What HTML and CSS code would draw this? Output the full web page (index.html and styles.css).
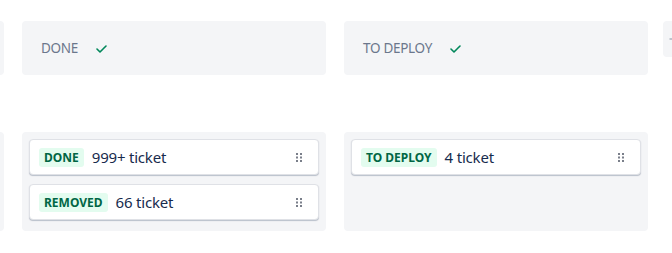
FILE: index.html
```html
<!DOCTYPE html>
<html>
<head>
<meta charset="utf-8">
<link rel="stylesheet" href="styles.css">
</head>
<body>
<div class="board">
  <section class="column">
    <div class="col-head"></div>
    <div class="col-body"></div>
  </section>
  <section class="column">
    <div class="col-head">
      <span class="col-title">DONE</span>
      <svg class="check" width="11" height="8" viewBox="0 0 11 8"><path d="M1 4 L4 7 L10 1" fill="none" stroke="#00875a" stroke-width="1.6" stroke-linecap="round" stroke-linejoin="round"/></svg>
    </div>
    <div class="col-body">
      <div class="card">
        <span class="badge">DONE</span>
        <span class="count">999+ ticket</span>
        <svg class="grip" width="6" height="9" viewBox="0 0 6 9"><g fill="#7a7f8a"><rect x="0" y="0" width="2" height="2"/><rect x="4" y="0" width="2" height="2"/><rect x="0" y="3.5" width="2" height="2"/><rect x="4" y="3.5" width="2" height="2"/><rect x="0" y="7" width="2" height="2"/><rect x="4" y="7" width="2" height="2"/></g></svg>
      </div>
      <div class="card">
        <span class="badge">REMOVED</span>
        <span class="count">66 ticket</span>
        <svg class="grip" width="6" height="9" viewBox="0 0 6 9"><g fill="#7a7f8a"><rect x="0" y="0" width="2" height="2"/><rect x="4" y="0" width="2" height="2"/><rect x="0" y="3.5" width="2" height="2"/><rect x="4" y="3.5" width="2" height="2"/><rect x="0" y="7" width="2" height="2"/><rect x="4" y="7" width="2" height="2"/></g></svg>
      </div>
    </div>
  </section>
  <section class="column">
    <div class="col-head">
      <span class="col-title">TO DEPLOY</span>
      <svg class="check" width="11" height="8" viewBox="0 0 11 8"><path d="M1 4 L4 7 L10 1" fill="none" stroke="#00875a" stroke-width="1.6" stroke-linecap="round" stroke-linejoin="round"/></svg>
    </div>
    <div class="col-body">
      <div class="card">
        <span class="badge">TO DEPLOY</span>
        <span class="count">4 ticket</span>
        <svg class="grip" width="6" height="9" viewBox="0 0 6 9"><g fill="#7a7f8a"><rect x="0" y="0" width="2" height="2"/><rect x="4" y="0" width="2" height="2"/><rect x="0" y="3.5" width="2" height="2"/><rect x="4" y="3.5" width="2" height="2"/><rect x="0" y="7" width="2" height="2"/><rect x="4" y="7" width="2" height="2"/></g></svg>
      </div>
    </div>
  </section>
  <div class="add-col">
    <svg class="add-icon" width="8" height="8" viewBox="0 0 8 8"><path d="M4 0.5 V7.5 M0.5 4 H7.5" stroke="#8993a4" stroke-width="1.2"/></svg>
  </div>
</div>
</body>
</html>
```

FILE: styles.css
```css
html, body {
  margin: 0;
  padding: 0;
  background: #ffffff;
  overflow: hidden;
}
body {
  font-family: "Noto Sans", "Open Sans", sans-serif;
  color: #172b4d;
}
.board {
  display: flex;
  align-items: flex-start;
  gap: 18px;
  padding-top: 21px;
  margin-left: -300px;
}
.column {
  flex: 0 0 304px;
  display: flex;
  flex-direction: column;
  gap: 57px;
}
.col-head {
  height: 54px;
  background: #f4f5f7;
  border-radius: 4px;
  display: flex;
  align-items: center;
  padding-left: 19px;
  box-sizing: border-box;
}
.col-title {
  font-size: 13.5px;
  color: #6b778c;
  letter-spacing: -0.3px;
}
.check {
  margin-left: 18px;
  margin-top: 1px;
}
.col-body {
  background: #f4f5f7;
  border-radius: 4px;
  padding: 7px 7px 10px;
  min-height: 82px;
  display: flex;
  flex-direction: column;
  gap: 9px;
}
.card {
  height: 36px;
  box-sizing: border-box;
  background: #ffffff;
  border: 1px solid #dfe1e6;
  border-radius: 4px;
  box-shadow: 0 1px 1px rgba(9, 30, 66, 0.25);
  display: flex;
  align-items: center;
  padding: 0 16px 0 9px;
}
.badge {
  background: #e3fcef;
  color: #006644;
  font-size: 12px;
  font-weight: 700;
  line-height: 19px;
  height: 19px;
  padding: 0 5px;
  border-radius: 3px;
}
.count {
  margin-left: 8px;
  font-size: 15px;
  letter-spacing: -0.2px;
  color: #172b4d;
  flex: 1;
}
.grip {
  flex: 0 0 auto;
}
.add-col {
  flex: 0 0 40px;
  margin-left: -3px;
  height: 36px;
  background: #f4f5f7;
  border-radius: 4px;
  display: flex;
  align-items: center;
  padding-left: 6px;
  box-sizing: border-box;
}
.add-icon {
  display: block;
}
```
